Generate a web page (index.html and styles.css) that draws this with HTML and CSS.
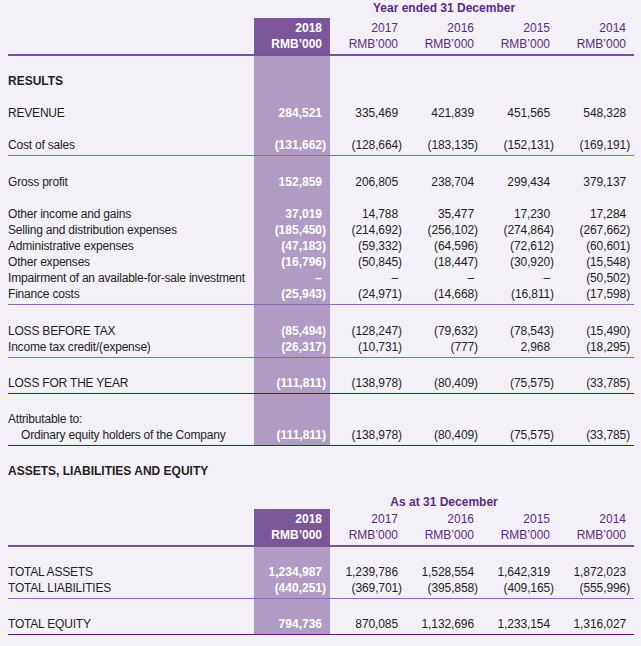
FILE: index.html
```html
<!DOCTYPE html>
<html lang="en">
<head>
<meta charset="utf-8">
<title>Five-year financial summary</title>
<link rel="stylesheet" href="styles.css">
</head>
<body>
<div class="page">
  <table class="fin">
    <colgroup><col class="lbl"><col class="yr"><col class="yr"><col class="yr"><col class="yr"><col class="yr"></colgroup>
    <tr class="title"><td></td><td colspan="5">Year ended 31 December</td></tr>
    <tr class="head"><td></td><td>2018<br>RMB’000</td><td>2017<br>RMB’000</td><td>2016<br>RMB’000</td><td>2015<br>RMB’000</td><td>2014<br>RMB’000</td></tr>
    <tr class="first"><td class="sec">RESULTS</td><td></td><td></td><td></td><td></td><td></td></tr>
    <tr class="gap"><td>REVENUE</td><td>284,521</td><td>335,469</td><td>421,839</td><td>451,565</td><td>548,328</td></tr>
    <tr class="gap end"><td>Cost of sales</td><td class="n">(131,662)</td><td class="n">(128,664)</td><td class="n">(183,135)</td><td class="n">(152,131)</td><td class="n">(169,191)</td></tr>
    <tr class="first wide"><td>Gross profit</td><td>152,859</td><td>206,805</td><td>238,704</td><td>299,434</td><td>379,137</td></tr>
    <tr class="gap"><td>Other income and gains</td><td>37,019</td><td>14,788</td><td>35,477</td><td>17,230</td><td>17,284</td></tr>
    <tr><td>Selling and distribution expenses</td><td class="n">(185,450)</td><td class="n">(214,692)</td><td class="n">(256,102)</td><td class="n">(274,864)</td><td class="n">(267,662)</td></tr>
    <tr><td>Administrative expenses</td><td class="n">(47,183)</td><td class="n">(59,332)</td><td class="n">(64,596)</td><td class="n">(72,612)</td><td class="n">(60,601)</td></tr>
    <tr><td>Other expenses</td><td class="n">(16,796)</td><td class="n">(50,845)</td><td class="n">(18,447)</td><td class="n">(30,920)</td><td class="n">(15,548)</td></tr>
    <tr><td>Impairment of an available-for-sale investment</td><td>–</td><td>–</td><td>–</td><td>–</td><td class="n">(50,502)</td></tr>
    <tr class="end"><td>Finance costs</td><td class="n">(25,943)</td><td class="n">(24,971)</td><td class="n">(14,668)</td><td class="n">(16,811)</td><td class="n">(17,598)</td></tr>
    <tr class="first wide"><td>LOSS BEFORE TAX</td><td class="n">(85,494)</td><td class="n">(128,247)</td><td class="n">(79,632)</td><td class="n">(78,543)</td><td class="n">(15,490)</td></tr>
    <tr class="end"><td>Income tax credit/(expense)</td><td class="n">(26,317)</td><td class="n">(10,731)</td><td class="n">(777)</td><td>2,968</td><td class="n">(18,295)</td></tr>
    <tr class="first end dark"><td>LOSS FOR THE YEAR</td><td class="n">(111,811)</td><td class="n">(138,978)</td><td class="n">(80,409)</td><td class="n">(75,575)</td><td class="n">(33,785)</td></tr>
    <tr class="first"><td>Attributable to:</td><td></td><td></td><td></td><td></td><td></td></tr>
    <tr class="end dark"><td class="ind">Ordinary equity holders of the Company</td><td class="n">(111,811)</td><td class="n">(138,978)</td><td class="n">(80,409)</td><td class="n">(75,575)</td><td class="n">(33,785)</td></tr>
  </table>

  <h2 class="section">ASSETS, LIABILITIES AND EQUITY</h2>

  <table class="fin fin-bs">
    <colgroup><col class="lbl"><col class="yr"><col class="yr"><col class="yr"><col class="yr"><col class="yr"></colgroup>
    <tr class="title"><td></td><td colspan="5">As at 31 December</td></tr>
    <tr class="head"><td></td><td>2018<br>RMB’000</td><td>2017<br>RMB’000</td><td>2016<br>RMB’000</td><td>2015<br>RMB’000</td><td>2014<br>RMB’000</td></tr>
    <tr class="first"><td>TOTAL ASSETS</td><td>1,234,987</td><td>1,239,786</td><td>1,528,554</td><td>1,642,319</td><td>1,872,023</td></tr>
    <tr class="end"><td>TOTAL LIABILITIES</td><td class="n">(440,251)</td><td class="n">(369,701)</td><td class="n">(395,858)</td><td class="n">(409,165)</td><td class="n">(555,996)</td></tr>
    <tr class="first end dark"><td>TOTAL EQUITY</td><td>794,736</td><td>870,085</td><td>1,132,696</td><td>1,233,154</td><td>1,316,027</td></tr>
  </table>
</div>
</body>
</html>
```

FILE: styles.css
```css
html, body {
  margin: 0;
  padding: 0;
  background: #f3f1f7;
}
body {
  font-family: "Liberation Sans", Arial, Helvetica, sans-serif;
  font-size: 12px;
  color: #231f20;
}
.page {
  padding: 0 7px 0 8px;
}
.fin {
  border-collapse: collapse;
  table-layout: fixed;
  width: 626px;
}
.fin col.lbl { width: 246px; }
.fin col.yr { width: 76px; }
.fin td {
  padding: 0 8px 0 0;
  line-height: 16px;
  text-align: right;
  white-space: nowrap;
  vertical-align: bottom;
  letter-spacing: -0.1px;
}
.fin td:first-child {
  text-align: left;
  padding-right: 0;
  letter-spacing: -0.2px;
}
.fin td.n { padding-right: 4px; }
.fin td:nth-child(2) {
  background: #b09bc5;
  color: #ffffff;
  font-weight: bold;
  letter-spacing: 0;
}
.fin td.ind { padding-left: 13px; }
.fin td.sec {
  font-weight: bold;
  letter-spacing: 0;
}

.fin .title td {
  background: transparent;
  color: #5b2b84;
  font-weight: bold;
  text-align: center;
  padding: 0 0 2px 0;
  letter-spacing: 0;
}
.fin-bs .title td {
  line-height: 14px;
  padding: 0;
}
.fin .head td {
  color: #5b2b84;
  padding-top: 2px;
  padding-bottom: 2px;
  border-bottom: 2px solid #7a529c;
  letter-spacing: 0;
}
.fin .head td:nth-child(2) {
  background: #7b5699;
  color: #ffffff;
}
.fin .first td { padding-top: 17px; }
.fin .first.wide td { padding-top: 18px; }
.fin .gap td { padding-top: 16px; }
.fin .end td {
  padding-bottom: 2px;
  border-bottom: 1px solid #8d67ab;
}
.fin .dark td { border-bottom-color: #4e1b74; }

.section {
  margin: 0 0 16px 0;
  padding: 17px 0 0 0;
  font-size: 12px;
  line-height: 16px;
  font-weight: bold;
}
```
